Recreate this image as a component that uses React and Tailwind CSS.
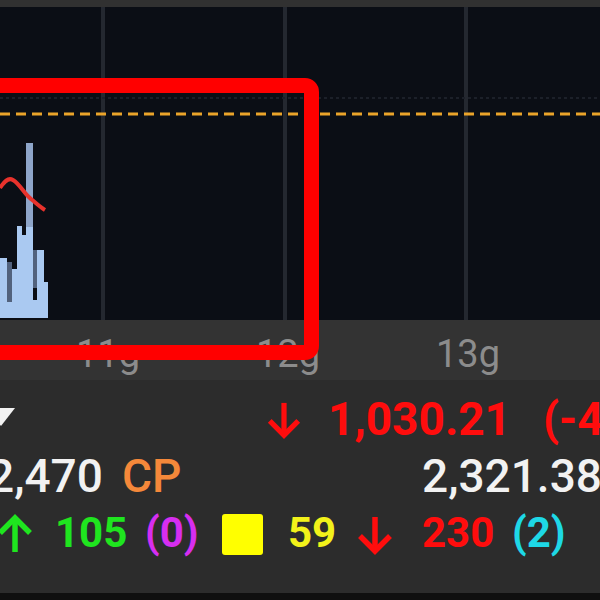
import React from 'react'

function ArrowDown({ color, className }) {
  return (
    <svg viewBox="0 0 40 40" className={className} fill="none">
      <path d="M20 2 V36" stroke={color} strokeWidth="5.5" />
      <path d="M5 21 L20 36 L35 21" stroke={color} strokeWidth="5.5" strokeLinejoin="miter" />
    </svg>
  )
}

function ArrowUp({ color, className }) {
  return (
    <svg viewBox="0 0 40 40" className={className} fill="none">
      <path d="M20 38 V4" stroke={color} strokeWidth="5.5" />
      <path d="M5 19 L20 4 L35 19" stroke={color} strokeWidth="5.5" strokeLinejoin="miter" />
    </svg>
  )
}

function Chart() {
  // y values are page y minus 7 (top strip)
  const light = '#aac9f1'
  const dark = '#52627d'
  return (
    <svg width="600" height="313" viewBox="0 0 600 313" className="block">
      <rect width="600" height="313" fill="#0b0e15" />
      {[103, 285, 466].map((x) => (
        <rect key={x} x={x - 2} y="0" width="4" height="313" fill="#242830" />
      ))}
      <line x1="0" y1="91" x2="600" y2="91" stroke="#1c2029" strokeWidth="2" strokeDasharray="3 3" />
      <line x1="0" y1="107" x2="600" y2="107" stroke="#eba42a" strokeWidth="3" strokeDasharray="10 6" />

      {/* histogram */}
      <rect x="0" y="293" width="48" height="18" fill={light} />
      <rect x="0" y="251" width="7" height="60" fill={light} />
      <rect x="7" y="255" width="5" height="40" fill={dark} />
      <rect x="12" y="262" width="5" height="49" fill={light} />
      <rect x="17" y="219" width="5" height="92" fill={light} />
      <rect x="22" y="228" width="4" height="83" fill={light} />
      <rect x="26" y="136" width="7" height="84" fill="#8ea5c9" />
      <rect x="26" y="220" width="7" height="91" fill={light} />
      <rect x="33" y="243" width="4" height="38" fill={dark} />
      <rect x="37" y="243" width="7" height="68" fill={light} />
      <rect x="44" y="275" width="4" height="36" fill={light} />

      <path
        d="M0 181 C4 175 8 170 13 173 C20 177 25 188 31 192 C36 196 40 200 45 203"
        stroke="#e8322c"
        strokeWidth="4"
        fill="none"
      />
    </svg>
  )
}

export default function App() {
  return (
    <div className="relative w-[600px] h-[600px] overflow-hidden bg-[#2c2c2c] font-[Roboto,sans-serif]">
      <div className="h-[7px] bg-[#313131]" />
      <Chart />

      {/* time axis */}
      <div className="h-[60px] bg-[#333333] flex pl-[18px] pt-[15px] text-[38px] leading-[38px] text-[#8c8c8c]">
        <div className="w-[180px] shrink-0 text-center">11g</div>
        <div className="w-[180px] shrink-0 text-center">12g</div>
        <div className="w-[180px] shrink-0 text-center">13g</div>
      </div>

      {/* quote panel */}
      <div className="h-[213px] bg-[#2c2c2c] whitespace-nowrap">
        <div className="flex items-start pt-[16px] h-[62px] text-[46px] leading-[46px] font-bold text-[#ff0d0d]">
          <div className="w-[265px] shrink-0 pt-[12px]">
            <svg width="16" height="18" viewBox="0 0 16 18">
              <polygon points="-14,0 15,0 1,18" fill="#f2f2f2" />
            </svg>
          </div>
          <div className="w-[63px] shrink-0 pt-[5px]">
            <ArrowDown color="#ff0d0d" className="w-[38px] h-[38px]" />
          </div>
          <div className="w-[215px] shrink-0">1,030.21</div>
          <div className="shrink-0">(-44.61%)</div>
        </div>

        <div className="flex items-start ml-[-12px] mt-[11px] h-[46px] text-[46px] leading-[46px] font-medium">
          <div className="w-[134px] shrink-0 text-[#f2f2f2]">2,470</div>
          <div className="w-[300px] shrink-0 text-[#f5883a]">CP</div>
          <div className="shrink-0 text-[#f2f2f2]">2,321.38</div>
        </div>

        <div className="flex items-start ml-[-5px] mt-[13px] h-[42px] text-[42px] leading-[42px] font-bold">
          <div className="w-[60px] shrink-0 pt-[2px]">
            <ArrowUp color="#1fe51f" className="w-[40px] h-[40px]" />
          </div>
          <div className="w-[90px] shrink-0 text-[#1fe51f]">105</div>
          <div className="w-[77px] shrink-0 text-[#d62ef0]">(0)</div>
          <div className="w-[66px] shrink-0 pt-[2px]">
            <div className="w-[41px] h-[41px] rounded-[3px] bg-[#ffff00]" />
          </div>
          <div className="w-[67px] shrink-0 text-[#f2f21a]">59</div>
          <div className="w-[67px] shrink-0 pt-[3px]">
            <ArrowDown color="#ff0d0d" className="w-[40px] h-[40px]" />
          </div>
          <div className="w-[90px] shrink-0 text-[#ff0d0d]">230</div>
          <div className="shrink-0 text-[#1ed8e6]">(2)</div>
        </div>
      </div>

      <div className="h-[7px] bg-[#0f0f0f]" />

      {/* red annotation box */}
      <div className="absolute left-[-30px] top-[78px] w-[349px] h-[282px] border-[15px] border-[#ff0000] rounded-[14px]" />
    </div>
  )
}
